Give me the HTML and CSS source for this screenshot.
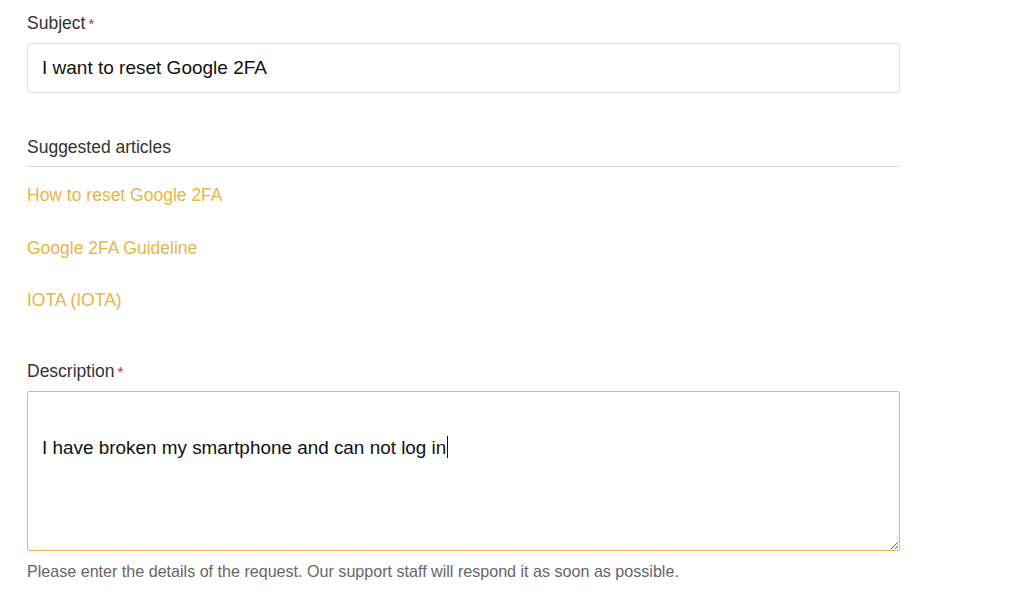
FILE: index.html
```html
<!DOCTYPE html>
<html lang="en">
<head>
<meta charset="utf-8">
<title>Submit a request</title>
<link rel="stylesheet" href="styles.css">
</head>
<body>
<form class="form">
  <div class="field">
    <label class="label" for="subject">Subject<span class="req">*</span></label>
    <input class="input" id="subject" type="text" value="I want to reset Google 2FA">
  </div>
  <section class="suggest">
    <h3 class="suggest-title">Suggested articles</h3>
    <ul class="suggest-list">
      <li><a href="#">How to reset Google 2FA</a></li>
      <li><a href="#">Google 2FA Guideline</a></li>
      <li><a href="#">IOTA (IOTA)</a></li>
    </ul>
  </section>
  <div class="field desc-field">
    <label class="label">Description<span class="req">*</span></label>
    <div class="textarea"><p class="ta-line">I have broken my smartphone and can not log in<span class="caret"></span></p></div>
    <p class="hint">Please enter the details of the request. Our support staff will respond it as soon as possible.</p>
  </div>
</form>
</body>
</html>
```

FILE: styles.css
```css
html, body {
  margin: 0;
  padding: 0;
  background: #fff;
}
body {
  font-family: "Liberation Sans", Arial, sans-serif;
  color: #333;
}
.form {
  width: 873px;
  margin-left: 27px;
  padding-top: 13px;
}
.field {
  display: flex;
  flex-direction: column;
}
.label {
  font-size: 17.5px;
  line-height: 20px;
  color: #333;
  margin-bottom: 9px;
}
.req {
  color: #d0202a;
  margin-left: 3px;
  font-size: 15px;
}
.input {
  box-sizing: border-box;
  height: 50px;
  width: 100%;
  border: 1px solid #dcdcdc;
  border-radius: 4px;
  padding: 0 14px;
  font-family: "Liberation Sans", Arial, sans-serif;
  font-size: 19px;
  color: #111;
  outline: none;
  margin: 0;
}
.suggest {
  margin-top: 44px;
}
.suggest-title {
  margin: 0;
  font-weight: normal;
  font-size: 17.5px;
  line-height: 20px;
  color: #333;
  padding-bottom: 9px;
  border-bottom: 1px solid #d9d9d9;
}
.suggest-list {
  list-style: none;
  margin: 18px 0 0;
  padding: 0;
  display: flex;
  flex-direction: column;
  gap: 32.5px;
}
.suggest-list a {
  font-size: 17.5px;
  line-height: 20px;
  color: #e8b548;
  text-decoration: none;
  display: block;
}
.desc-field {
  margin-top: 51px;
}
.textarea {
  box-sizing: border-box;
  height: 160px;
  border: 1px solid #ebbd45;
  border-radius: 2px;
  padding: 14px 14px;
  resize: vertical;
  overflow: auto;
}
.ta-line {
  margin: 28px 0 0;
  font-size: 18.9px;
  line-height: 28px;
  color: #111;
}
.caret {
  display: inline-block;
  width: 1px;
  height: 22px;
  background: #111;
  vertical-align: -4px;
  margin-left: 1px;
}
.hint {
  margin: 10px 0 0;
  font-size: 16.1px;
  line-height: 20px;
  color: #666;
}
```
